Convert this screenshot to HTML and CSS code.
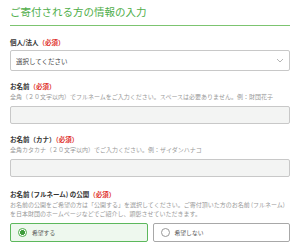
FILE: index.html
```html
<!DOCTYPE html>
<html lang="ja">
<head>
  <meta charset="UTF-8">
  <meta name="viewport" content="width=device-width, initial-scale=1.0">
  <title>ご寄付される方の情報の入力</title>
  <link rel="stylesheet" href="styles.css">
</head>
<body>
  <div class="form">
    <!-- Section title -->
    <h2 class="form-title">ご寄付される方の情報の入力</h2>

    <!-- Type -->
    <div class="field">
      <div class="label">個人/法人<span class="req">（必須）</span></div>
      <div class="select-wrap">
        <select class="select">
          <option>選択してください</option>
          <option>個人</option>
          <option>法人</option>
        </select>
        <svg class="chevron" width="8" height="5" viewBox="0 0 8 5">
          <polyline points="1,1 4,4 7,1" fill="none" stroke="#b5b5b5" stroke-width="1"/>
        </svg>
      </div>
    </div>

    <!-- Name -->
    <div class="field">
      <div class="label">お名前<span class="req">（必須）</span></div>
      <div class="help">全角（２０文字以内）でフルネームをご入力ください。スペースは必要ありません。例：財団花子</div>
      <input class="input" type="text">
    </div>

    <!-- Kana -->
    <div class="field">
      <div class="label">お名前（カナ）<span class="req">（必須）</span></div>
      <div class="help">全角カタカナ（２０文字以内）でご入力ください。例：ザイダンハナコ</div>
      <input class="input" type="text">
    </div>

    <!-- Publish -->
    <div class="field field-radio">
      <div class="label">お名前 (フルネーム) の公開<span class="req">（必須）</span></div>
      <div class="help">お名前の公開をご希望の方は「公開する」を選択してください。ご寄付頂いた方のお名前 (フルネーム) を日本財団のホームページなどでご紹介し、顕彰させていただきます。</div>
      <div class="radios">
        <label class="radio checked">
          <input type="radio" name="publish" checked>
          <span>希望する</span>
        </label>
        <label class="radio">
          <input type="radio" name="publish">
          <span>希望しない</span>
        </label>
      </div>
    </div>
  </div>
</body>
</html>
```

FILE: styles.css
```css
body {
  margin: 0;
  background-color: white;
  font-family: "Noto Sans CJK JP", "Noto Sans", sans-serif;
  color: #333;
}

.form {
  padding: 0 10px;
}

/* Title */
.form-title {
  margin: 0 0 11px;
  padding: 5px 0 6px;
  font-size: 10.5px;
  line-height: 14px;
  font-weight: normal;
  color: #4fae4a;
  border-bottom: 1px solid #7cc470;
}

/* Fields */
.field + .field {
  margin-top: 10px;
}

.field-radio {
  margin-top: 12px !important;
}

.label {
  font-size: 6.5px;
  line-height: 10px;
  font-weight: bold;
  color: #333;
}

.req {
  color: #e0322c;
}

.help {
  margin-top: 1px;
  font-size: 6px;
  line-height: 9px;
  color: #999;
}

/* Select */
.select-wrap {
  position: relative;
  margin-top: 3px;
}

.select {
  display: block;
  width: 100%;
  height: 21px;
  margin: 0;
  padding: 0 5px;
  appearance: none;
  border: 1px solid #c8c8c8;
  border-radius: 2px;
  background: white;
  font-family: inherit;
  font-size: 6.5px;
  color: #444;
  box-sizing: border-box;
}

.chevron {
  position: absolute;
  right: 6px;
  top: 8px;
}

/* Text input */
.input {
  display: block;
  width: 100%;
  height: 18px;
  margin: 5px 0 0;
  padding: 0 5px;
  border: 1px solid #c8c8c8;
  border-radius: 2px;
  background: #f3f4f3;
  box-sizing: border-box;
}

/* Radios */
.radios {
  display: flex;
  gap: 5px;
  margin-top: 5px;
}

.radio {
  flex: 1;
  display: flex;
  align-items: center;
  gap: 5px;
  height: 19px;
  padding: 0 7px;
  border: 1px solid #a8a8a8;
  border-radius: 2px;
  box-sizing: border-box;
  font-size: 5.8px;
  color: #555;
}

.radio.checked {
  border-color: #5cb85c;
  background: #eef8ee;
}

.radio input {
  appearance: none;
  margin: 0;
  width: 9px;
  height: 9px;
  border: 1px solid #999;
  border-radius: 50%;
  background: white;
  box-sizing: border-box;
}

.radio input:checked {
  border-color: #4fae4a;
  background: radial-gradient(circle, #3d9c3a 0 2.2px, white 2.7px);
}
```
